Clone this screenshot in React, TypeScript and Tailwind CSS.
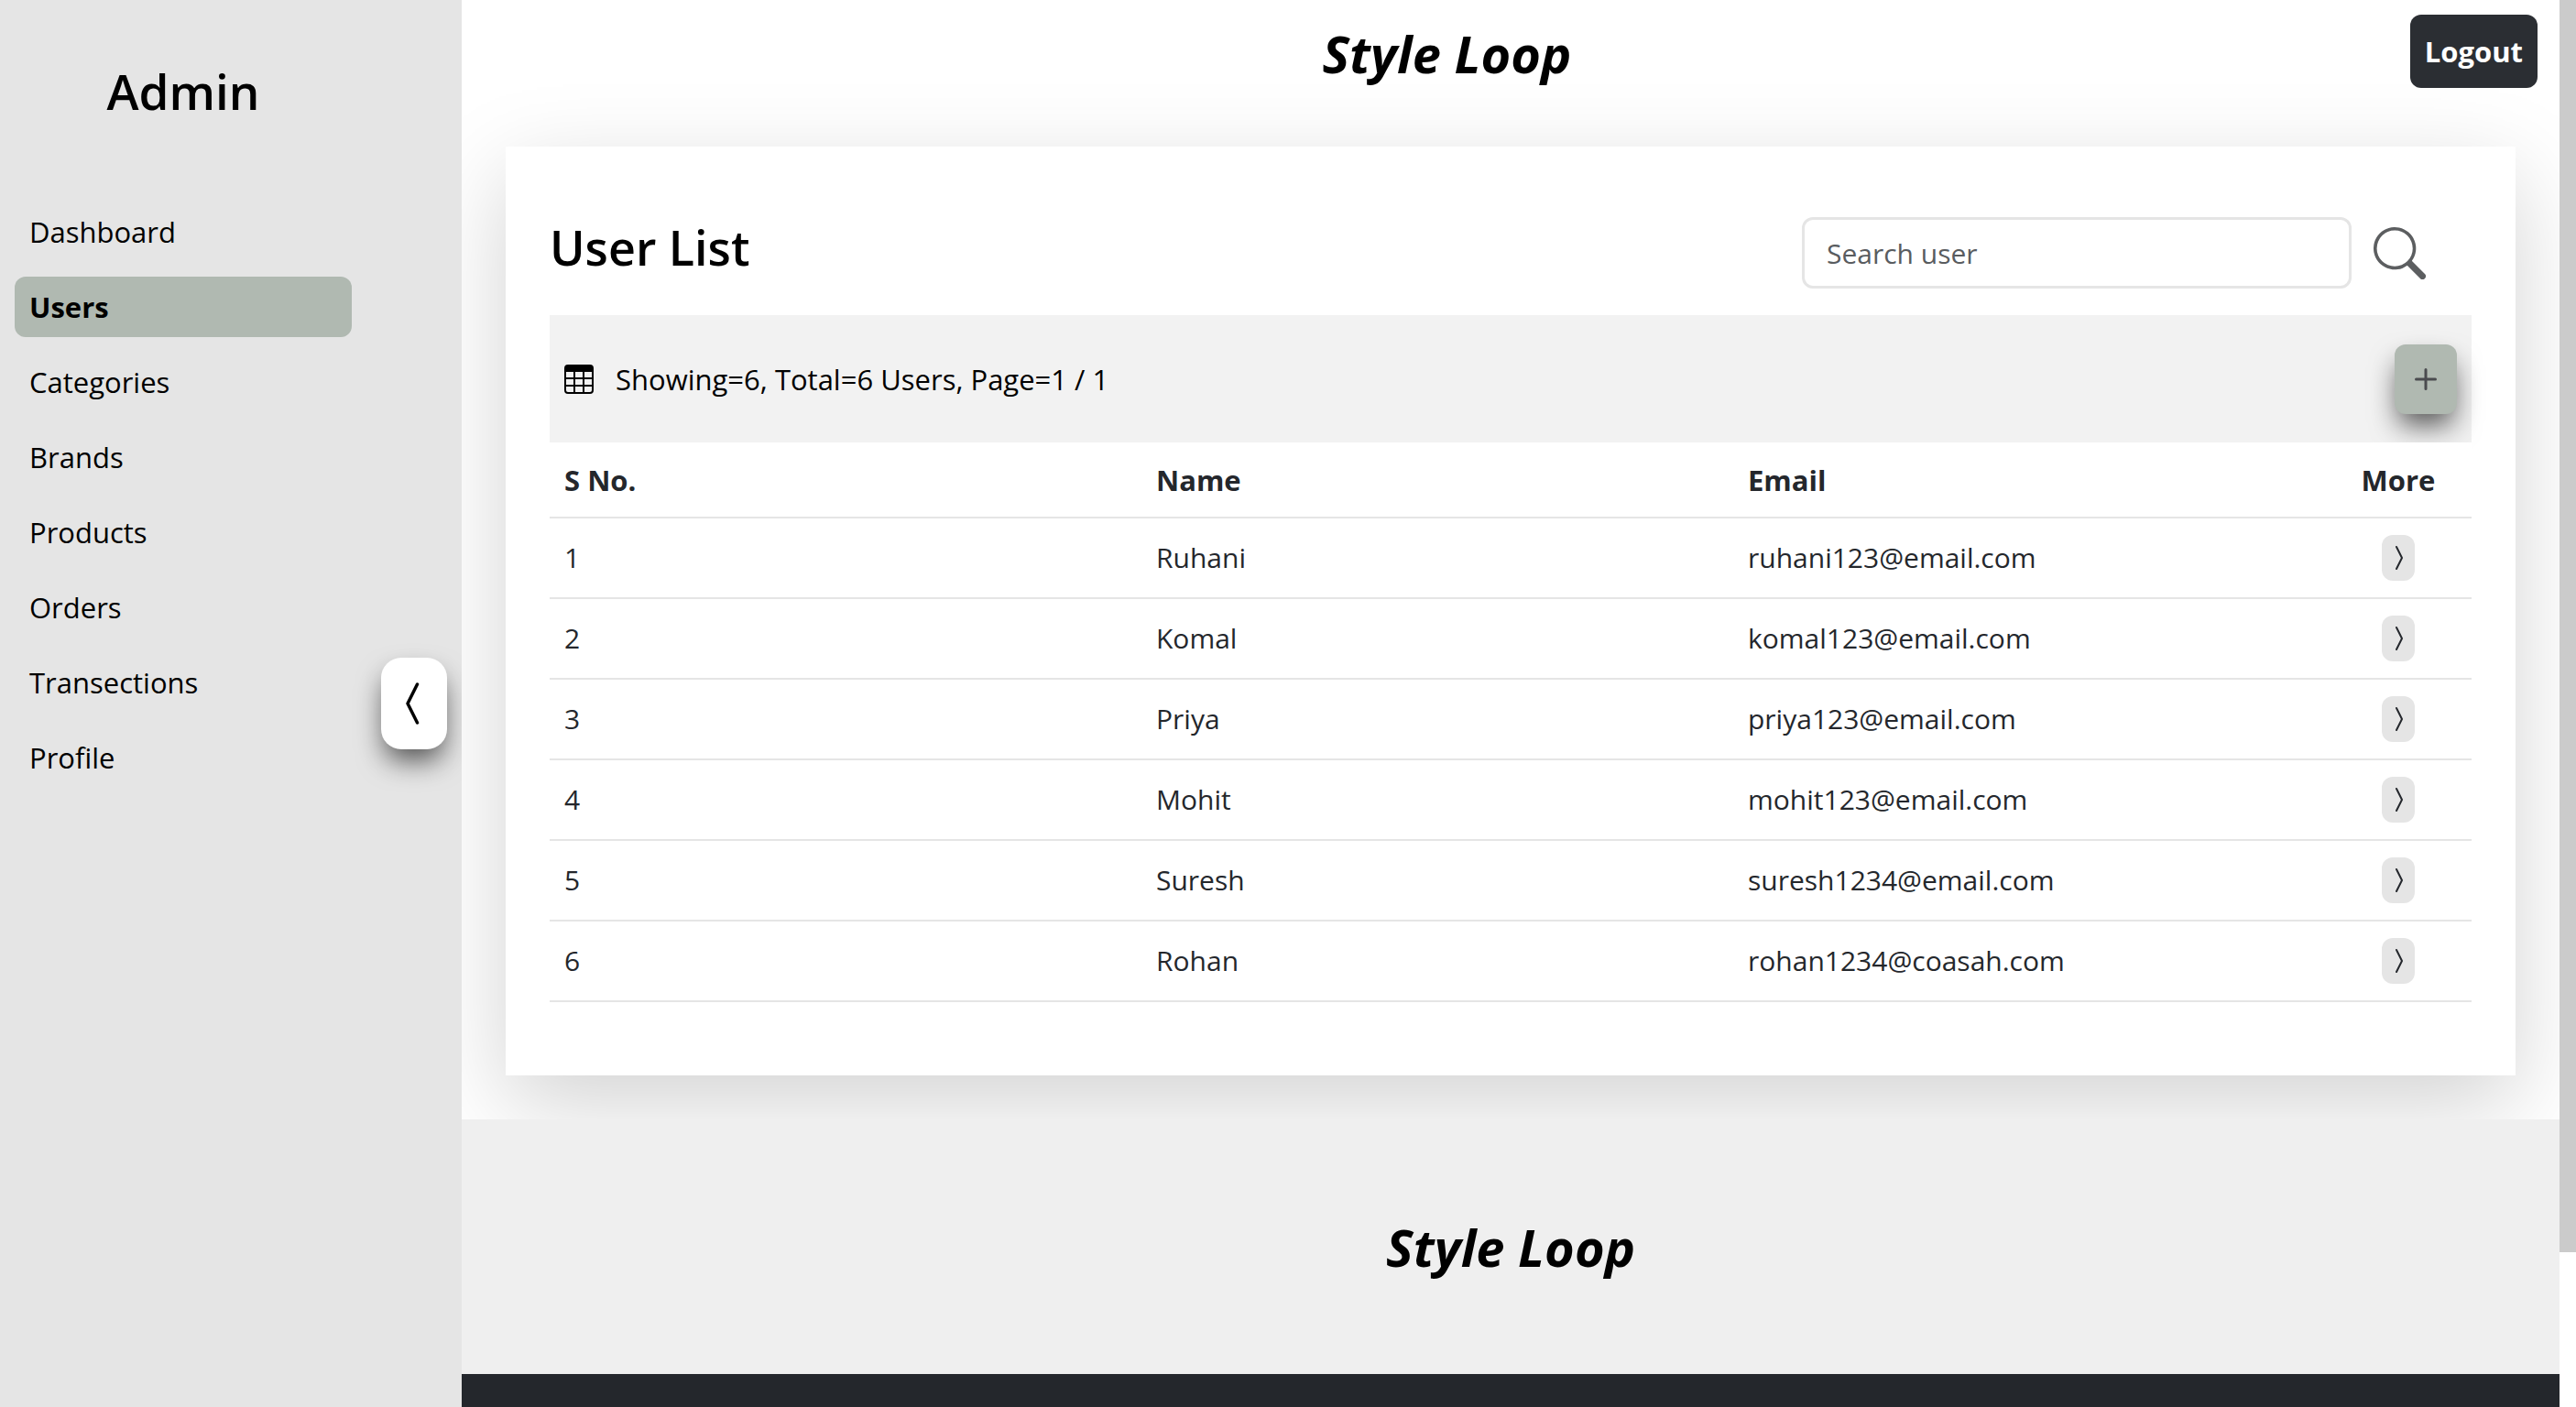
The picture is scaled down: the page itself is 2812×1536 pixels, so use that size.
import React from 'react';
import {
  BsChevronCompactLeft,
  BsChevronCompactRight,
  BsPlus,
  BsSearch,
  BsTable,
} from 'react-icons/bs';

const links = ['Dashboard', 'Users', 'Categories', 'Brands', 'Products', 'Orders', 'Transections', 'Profile'];

const users = [
  { name: 'Ruhani', email: 'ruhani123@email.com' },
  { name: 'Komal', email: 'komal123@email.com' },
  { name: 'Priya', email: 'priya123@email.com' },
  { name: 'Mohit', email: 'mohit123@email.com' },
  { name: 'Suresh', email: 'suresh1234@email.com' },
  { name: 'Rohan', email: 'rohan1234@coasah.com' },
];

function Sidebar({ active }: { active: string }) {
  return (
    <aside className="flex w-[504px] shrink-0 gap-8 overflow-hidden bg-[#e5e5e5] px-4">
      <nav className="w-[368px]" aria-label="Admin">
        <h2 className="pt-16 pb-[84px] text-center text-[53px] leading-[72px] font-semibold">Admin</h2>
        <ul className="flex flex-col gap-4">
          {links.map((label) => (
            <li key={label}>
              <a
                href="#"
                className={
                  label === active
                    ? 'block rounded-xl bg-[#b0b9b1] px-4 py-2 text-[31px] leading-[50px] font-bold'
                    : 'block rounded-xl px-4 py-2 text-[31px] leading-[50px]'
                }
              >
                {label}
              </a>
            </li>
          ))}
        </ul>
      </nav>
      <button
        type="button"
        aria-label="Collapse sidebar"
        className="flex h-[100px] w-[72px] items-center justify-center self-center rounded-[22px] bg-white shadow-[0_16px_30px_-4px_rgba(0,0,0,0.65)]"
      >
        <BsChevronCompactLeft size={56} className="shrink-0" />
      </button>
    </aside>
  );
}

function UserCard() {
  return (
    <section className="mx-12 bg-white px-12 pt-[72px] pb-20 shadow-[0_32px_96px_rgba(0,0,0,0.175)]">
      <div className="flex items-start justify-between pb-6">
        <h3 className="text-[52px] leading-[76px] font-semibold">User List</h3>
        <form className="flex h-[88px] items-center gap-6 pr-[50px]">
          <input
            type="search"
            aria-label="Search user"
            placeholder="Search user"
            className="h-[78px] w-[600px] rounded-xl border-3 border-[#e5e5e5] px-6 text-[30px] placeholder:text-[#595c5f]"
          />
          <button type="button" aria-label="Search" className="text-[#5c5e60]">
            <BsSearch size={57} />
          </button>
        </form>
      </div>
      <div className="flex h-[139px] items-center bg-[#f2f2f2] px-4">
        <BsTable size={32} />
        <p className="ml-6 flex-1 text-[31px] leading-[48px]">Showing=6, Total=6 Users, Page=1 / 1</p>
        <button
          type="button"
          aria-label="Add user"
          className="flex h-[76px] w-[68px] items-center justify-center rounded-xl bg-[#b0b9b1] text-[#4a4b4f] shadow-[0_16px_30px_-4px_rgba(0,0,0,0.65)]"
        >
          <BsPlus size={48} />
        </button>
      </div>
      <table className="relative w-full table-fixed border-collapse bg-white text-left text-[30px] leading-[48px] text-[#24272c]">
        <thead>
          <tr className="h-[82px] border-b-2 border-[#e5e5e5] text-[31px]">
            <th scope="col" className="px-4">S No.</th>
            <th scope="col" className="px-4">Name</th>
            <th scope="col" className="px-4">Email</th>
            <th scope="col" className="w-40 text-center">More</th>
          </tr>
        </thead>
        <tbody>
          {users.map((user, i) => (
            <tr key={user.email} className="h-[88px] border-b-2 border-[#e5e5e5]">
              <td className="px-4">{i + 1}</td>
              <td className="px-4">{user.name}</td>
              <td className="px-4">{user.email}</td>
              <td>
                <button
                  type="button"
                  aria-label={`More about ${user.name}`}
                  className="mx-auto flex h-[50px] w-9 items-center justify-center rounded-xl bg-[#e5e5e5]"
                >
                  <BsChevronCompactRight size={32} className="shrink-0" />
                </button>
              </td>
            </tr>
          ))}
        </tbody>
      </table>
    </section>
  );
}

export default function App() {
  return (
    <div className="flex h-screen overflow-hidden bg-white font-['Open_Sans','Noto_Sans',sans-serif] text-black">
      <Sidebar active="Users" />
      <div className="flex min-w-0 flex-1 flex-col overflow-hidden">
        <header className="flex items-center px-6 pt-4 pb-16">
          <h1 className="flex-1 pt-1 text-center text-[56px] leading-[76px] font-bold italic">Style Loop</h1>
          <button type="button" className="relative h-20 rounded-xl bg-[#2b2e33] px-4 text-[31px] font-bold text-white">
            Logout
          </button>
        </header>
        <main className="pb-12">
          <UserCard />
        </main>
        <footer className="relative flex flex-1 flex-col">
          <p className="bg-[#efefef] py-[99px] text-center text-[56px] leading-[80px] font-bold italic">
            Style Loop
          </p>
          <div className="flex-1 bg-[#24272c]" />
        </footer>
      </div>
      <div className="w-[18px] shrink-0 bg-white">
        <div className="h-[89%] bg-[#cbcbcb]" />
      </div>
    </div>
  );
}
